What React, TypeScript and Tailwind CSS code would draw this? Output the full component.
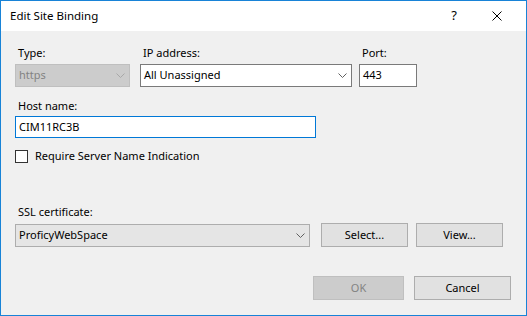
import React from 'react';

const font = { fontFamily: '"Segoe UI", "Noto Sans", "Open Sans", sans-serif' };

function Chevron({ color = '#606060' }: { color?: string }) {
  return (
    <svg width="9" height="5" viewBox="0 0 9 5" className="shrink-0">
      <path d="M0.5 0.5 L4.5 4.5 L8.5 0.5" fill="none" stroke={color} strokeWidth="1" />
    </svg>
  );
}

function Label({ children }: { children: React.ReactNode }) {
  return <div className="h-[16px] pl-[3px] text-[11px] leading-[16px] text-black">{children}</div>;
}

export default function App() {
  return (
    <div
      className="flex h-[316px] w-[527px] flex-col border border-[#1883d7] bg-[#f0f0f0] text-[11px] text-black"
      style={font}
    >
      {/* title bar */}
      <div className="flex h-[30px] items-center bg-white pl-[9px] pr-[6px]">
        <span className="flex-1 text-[11.5px] leading-[16px]">Edit Site Binding</span>
        <span className="w-[40px] text-center text-[13px]">?</span>
        <span className="flex w-[46px] items-center justify-center">
          <svg width="10" height="10" viewBox="0 0 10 10">
            <path d="M0.5 0.5 L9.5 9.5 M9.5 0.5 L0.5 9.5" stroke="#000" strokeWidth="1" />
          </svg>
        </span>
      </div>

      <div className="flex flex-1 flex-col pl-[14px] pt-[14px]">
        {/* row 1 */}
        <div className="flex">
          <div className="w-[115px]">
            <Label>Type:</Label>
            <div className="mt-[3px] flex h-[23px] items-center justify-between border border-[#bfbfbf] bg-[#cccccc] pl-[3px] pr-[4px] text-[#838383]">
              <span>https</span>
              <Chevron color="#a8a8a8" />
            </div>
          </div>
          <div className="ml-[10px] w-[212px]">
            <Label>IP address:</Label>
            <div className="mt-[3px] flex h-[23px] items-center justify-between border border-[#7a7a7a] bg-white pl-[3px] pr-[4px]">
              <span>All Unassigned</span>
              <Chevron />
            </div>
          </div>
          <div className="ml-[7px] w-[58px]">
            <Label>Port:</Label>
            <div className="mt-[3px] flex h-[23px] items-center border border-[#7a7a7a] bg-white pl-[3px]">443</div>
          </div>
        </div>

        {/* host name */}
        <div className="mt-[11px]">
          <Label>Host name:</Label>
          <div className="mt-[2px] flex h-[22px] w-[301px] items-center border border-[#0078d7] bg-white pl-[3px]">
            CIM11RC3B
          </div>
        </div>

        <div className="mt-[10px] flex items-center">
          <div className="h-[13px] w-[13px] border border-[#333333] bg-white" />
          <span className="ml-[7px] leading-[16px]">Require Server Name Indication</span>
        </div>

        {/* ssl */}
        <div className="mt-[40px]">
          <Label>SSL certificate:</Label>
          <div className="mt-[3px] flex items-center">
            <div className="flex h-[23px] w-[295px] items-center justify-between border border-[#adadad] bg-[#e5e5e5] pl-[3px] pr-[4px]">
              <span>ProficyWebSpace</span>
              <Chevron />
            </div>
            <button className="ml-[11px] h-[24px] w-[87px] border border-[#adadad] bg-[#e1e1e1]">Select...</button>
            <button className="ml-[8px] h-[24px] w-[87px] border border-[#adadad] bg-[#e1e1e1]">View...</button>
          </div>
        </div>

        {/* footer */}
        <div className="mt-[29px] flex justify-end pr-[15px]">
          <button className="h-[24px] w-[91px] border border-[#bfbfbf] bg-[#cccccc] text-[#838383]">OK</button>
          <button className="ml-[10px] h-[24px] w-[97px] border border-[#adadad] bg-[#e1e1e1]">Cancel</button>
        </div>
      </div>
    </div>
  );
}
